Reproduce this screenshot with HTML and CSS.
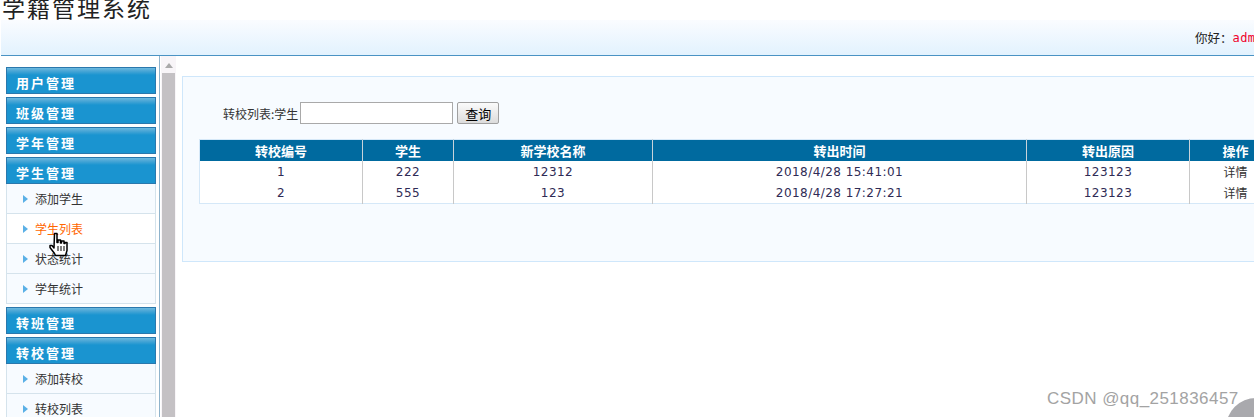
FILE: index.html
```html
<!DOCTYPE html>
<html lang="zh">
<head>
<meta charset="utf-8">
<title>学籍管理系统</title>
<link rel="stylesheet" href="styles.css">
</head>
<body>
<div class="app">
  <h1 class="title">学籍管理系统</h1>
  <header class="topbar"><span class="hello">你好：</span><span class="user">admin</span></header>
  <div class="body">
    <aside class="side">
      <nav class="menu">
        <div class="group">用户管理</div>
        <div class="group">班级管理</div>
        <div class="group">学年管理</div>
        <div class="group">学生管理</div>
        <ul class="sub">
          <li class="item">添加学生</li>
          <li class="item item-on">学生列表</li>
          <li class="item">状态统计</li>
          <li class="item">学年统计</li>
        </ul>
        <div class="group">转班管理</div>
        <div class="group">转校管理</div>
        <ul class="sub">
          <li class="item">添加转校</li>
          <li class="item">转校列表</li>
        </ul>
      </nav>
    </aside>
    <div class="scroll"><span class="scroll-up"></span><span class="scroll-thumb"></span></div>
    <main class="main">
      <section class="panel">
        <form class="search">
          <label class="search-label">转校列表:学生</label><input class="search-input" type="text"><button class="search-btn" type="button">查询</button>
        </form>
        <table class="grid">
          <colgroup><col class="c1"><col class="c2"><col class="c3"><col class="c4"><col class="c5"><col class="c6"></colgroup>
          <thead>
            <tr><th>转校编号</th><th>学生</th><th>新学校名称</th><th>转出时间</th><th>转出原因</th><th>操作</th></tr>
          </thead>
          <tbody>
            <tr><td>1</td><td>222</td><td>12312</td><td>2018/4/28 15:41:01</td><td>123123</td><td class="op">详情</td></tr>
            <tr><td>2</td><td>555</td><td>123</td><td>2018/4/28 17:27:21</td><td>123123</td><td class="op">详情</td></tr>
          </tbody>
        </table>
      </section>
    </main>
  </div>
</div>
<svg class="cursor" width="20" height="26" viewBox="0 0 20 26">
  <path d="M5.500 1.500h2.500v9h1V8h2.500v3h1V9h2.500v2.500h1v-1h2v8l-1.500 5h-10l-1-2-4.500-6v-2h2l2 2.500z" fill="#fff" stroke="#000" stroke-width="1.500" stroke-linejoin="round"/>
  <path d="M9 14v5M12 14v5M15 14v5" stroke="#000" stroke-width="1"/>
</svg>
<div class="corner"></div>
<div class="mark">CSDN @qq_251836457</div>
</body>
</html>
```
FILE: styles.css
```css
html, body { margin: 0; padding: 0; height: 100%; background: #fff; overflow: hidden; }
body { font-family: "Noto Sans CJK SC", "Liberation Sans", sans-serif; font-size: 12px; color: #333; }
.app { width: 1400px; }
.title { margin: 0; height: 20px; line-height: 15px; font-size: 23px; font-weight: 400; letter-spacing: 2px; color: #222; white-space: nowrap; font-family: "Noto Sans CJK SC", serif; padding-left: 2px; }
.topbar { height: 35px; border-bottom: 1px solid #4a93c4; background: linear-gradient(#fafcff, #e2f2fe); display: flex; align-items: center; padding: 0 0 0 1194px; margin-left: 1px; white-space: nowrap; }
.hello { color: #222; font-size: 12.500px; }
.user { color: #f0002a; font-family: "DejaVu Sans Mono", monospace; font-size: 12px; letter-spacing: .4px; }
.body { display: flex; align-items: flex-start; height: 361px; overflow: hidden; }
.side { height: 361px; width: 160px; flex: none; box-sizing: border-box; border-right: 1px solid #8eb3cc; padding-top: 11px; }
.menu { margin-left: 6px; width: 150px; }
.group { height: 27px; margin-bottom: 3px; box-sizing: border-box; border: 1px solid #2a78ad; background: linear-gradient(#6cb9df 0, #4aa6d6 3px, #1a94d0 7px, #1a94d0 100%); color: #fff; font-weight: 700; font-size: 13px; letter-spacing: 2px; line-height: 29px; padding-left: 9px; overflow: hidden; }
.sub { list-style: none; margin: -3px 0 3px; padding: 0; border: 1px solid #d5e3ec; border-top: 0; background: #f7fbff; }
.item { height: 30px; box-sizing: border-box; border-bottom: 1px solid #d5e3ec; line-height: 29px; padding-left: 28px; color: #333; position: relative; }
.item:last-child { border-bottom: 0; height: 29px; }
.item::before { content: ""; position: absolute; left: 16px; top: 11px; border-left: 5px solid #5ab0e6; border-top: 4px solid transparent; border-bottom: 4px solid transparent; }
.item-on { color: #ff6600; background: #fff; }
.scroll { width: 15px; margin-left: 1px; height: 361px; flex: none; background: #f8f5f8; display: flex; flex-direction: column; align-items: center; }
.scroll-up { margin-top: 7px; border-bottom: 5px solid #aaa; border-left: 4px solid transparent; border-right: 4px solid transparent; width: 0; height: 0; }
.scroll-thumb { margin-top: 5px; width: 13px; flex: 1; background: #c4c1c4; }
.main { flex: none; margin-left: 6px; padding-top: 20px; width: 1218px; }
.panel { height: 186px; box-sizing: border-box; border: 1px solid #cfe7fb; background: #f7fbff; padding: 25px 0 0 16px; }
.search { display: flex; align-items: center; height: 22px; padding-left: 24px; }
.search-label { color: #333; white-space: nowrap; }
.search-input { width: 153px; height: 22px; box-sizing: border-box; margin: 0 4px 0 2px; padding: 0; border: 1px solid #a9a9a9; background: #fff; }
.search-btn { width: 42px; height: 22px; box-sizing: border-box; padding: 0; border: 1px solid #a0a0a0; border-radius: 2px; background: linear-gradient(#fbfbfb, #dcdcdc); color: #000; font: 13px "Noto Sans CJK SC", sans-serif; }
.grid { margin-top: 15px; border-collapse: collapse; table-layout: fixed; width: 1090px; border: 2px solid #d5e8f8; border-width: 1px 0 1px 1px; background: #fff; }
.c1 { width: 163px; } .c2 { width: 91px; } .c3 { width: 199px; } .c4 { width: 374px; } .c5 { width: 163px; } .c6 { width: 100px; }
.grid th { height: 21px; padding: 0; background: #006a9f; color: #fff; font-size: 13px; font-weight: 700; border-right: 1px solid #c8d3da; text-align: center; line-height: 20px; }
.grid td { height: 21px; padding: 0; border-right: 1px solid #c8c8c8; text-align: center; color: #2f2b55; font-family: "DejaVu Sans", sans-serif; font-size: 12px; letter-spacing: .45px; line-height: 20px; }
.grid td.op { font-family: "Noto Sans CJK SC", sans-serif; color: #333; letter-spacing: 0; }
.grid td.op, .grid th:last-child { padding-right: 8px; }
.cursor { position: absolute; left: 49px; top: 232px; }
.corner { position: absolute; left: 1226px; top: 398px; width: 60px; height: 60px; border-radius: 50%; background: #a9a9ad; }
.mark { position: absolute; left: 1047px; top: 389px; font: 17px/20px "Liberation Sans", sans-serif; letter-spacing: .45px; color: #a3a3a3; white-space: nowrap; }
```
